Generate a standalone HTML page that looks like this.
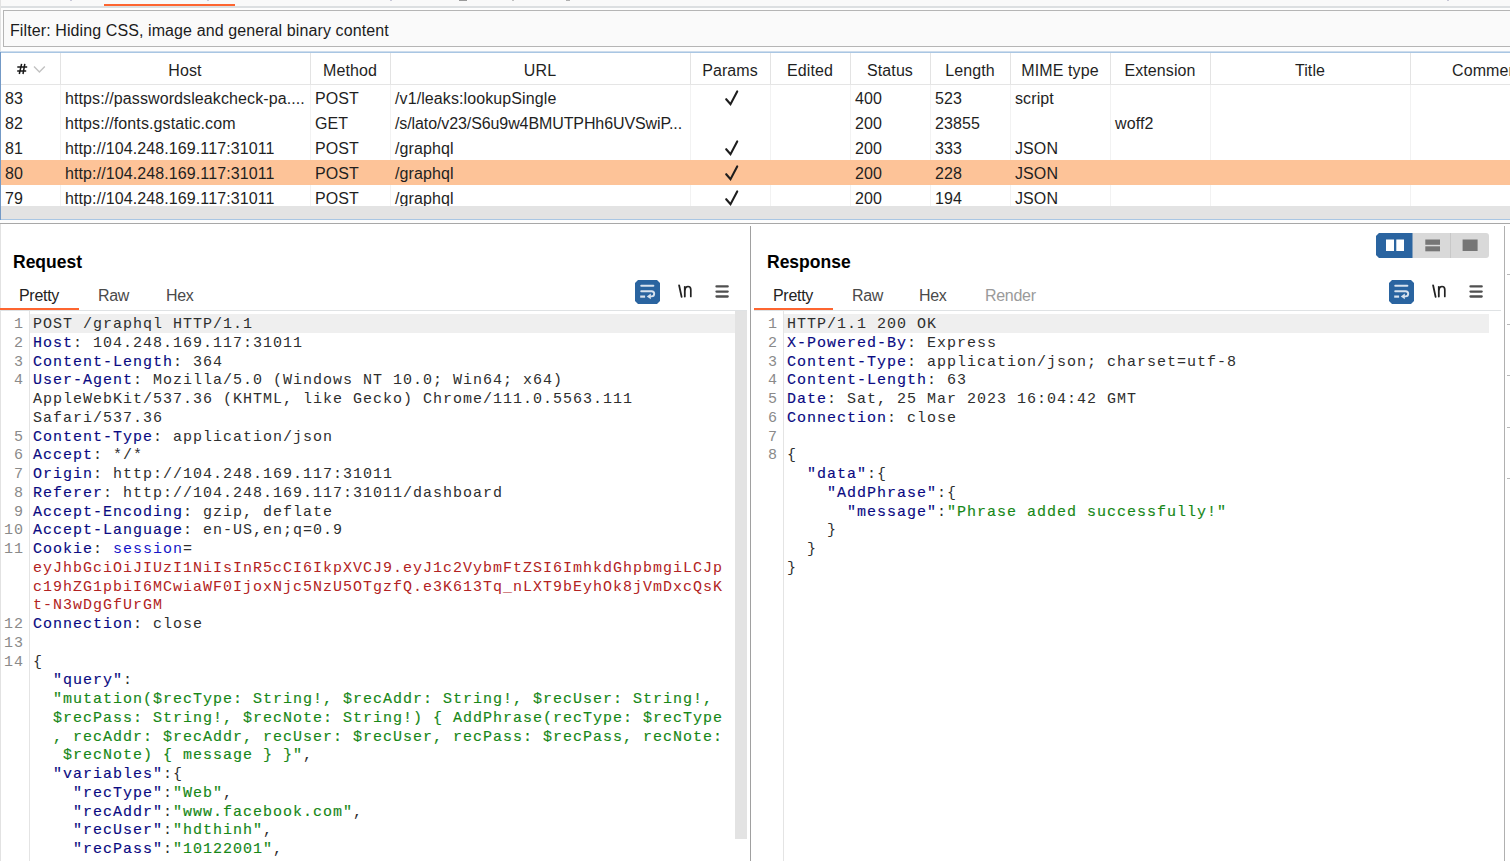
<!DOCTYPE html>
<html><head><meta charset="utf-8">
<style>
*{margin:0;padding:0;box-sizing:border-box}
html,body{width:1510px;height:861px;overflow:hidden;background:#fff}
body{position:relative;font-family:"Liberation Sans",sans-serif;color:#222}
.a{position:absolute}
.ui{font-family:"Liberation Sans",sans-serif;font-size:15px;letter-spacing:0.5px;white-space:pre;color:#1f1f1f}
.hd{position:absolute;top:54.5px;height:31px;line-height:31px;text-align:center;font-size:16px;letter-spacing:0.1px;white-space:pre;color:#1f1f1f}
.cell{position:absolute;margin-top:1px;height:25px;line-height:25px;white-space:pre;font-size:16px;letter-spacing:0.1px;color:#1f1f1f}
.code{position:absolute;font-family:"Liberation Mono",monospace;font-size:15px;letter-spacing:1px;line-height:18.75px;white-space:pre;color:#2e2e2e}
.ln{position:absolute;font-family:"Liberation Mono",monospace;font-size:15px;letter-spacing:1px;line-height:18.75px;white-space:pre;color:#8a8a8a;text-align:right}
.k{color:#0a0a82;-webkit-text-stroke:0.15px #0a0a82}
.r{color:#b22222}
.g{color:#178717;-webkit-text-stroke:0.15px #178717}
.tab{position:absolute;height:28px;line-height:28px;font-size:16px;letter-spacing:-0.3px;color:#4a4a4a;white-space:pre}
</style></head><body>

<div class="a" style="left:0px;top:0px;width:1510px;height:8px;background:#f9f9f9;"></div>
<div class="a" style="left:0px;top:6px;width:1510px;height:2px;background:#dcdfe1;"></div>
<div class="a" style="left:104px;top:4px;width:131px;height:2px;background:#fd6530;"></div>
<div class="a" style="left:0px;top:0px;width:1px;height:52px;background:#e2e2e2;"></div>
<div class="a" style="left:1px;top:8px;width:1509px;height:44px;background:#fdfdfd;"></div>
<div class="a" style="left:3px;top:10px;width:1507px;height:37px;background:#fafafa;border:1px solid #b5b5b5;border-right:none"></div>
<div class="a ui" style="left:10px;top:11.5px;height:37px;line-height:37px;font-size:16px;letter-spacing:0.1px;color:#1c1c1c">Filter: Hiding CSS, image and general binary content</div>
<div class="a" style="left:0px;top:52px;width:1510px;height:168px;background:#fff;"></div>
<div class="a" style="left:60px;top:53px;width:1px;height:31px;background:#e3e3e3;"></div>
<div class="a" style="left:60px;top:85px;width:1px;height:121px;background:#f2f2f2;"></div>
<div class="a" style="left:310px;top:53px;width:1px;height:31px;background:#e3e3e3;"></div>
<div class="a" style="left:310px;top:85px;width:1px;height:121px;background:#f2f2f2;"></div>
<div class="a" style="left:390px;top:53px;width:1px;height:31px;background:#e3e3e3;"></div>
<div class="a" style="left:390px;top:85px;width:1px;height:121px;background:#f2f2f2;"></div>
<div class="a" style="left:690px;top:53px;width:1px;height:31px;background:#e3e3e3;"></div>
<div class="a" style="left:690px;top:85px;width:1px;height:121px;background:#f2f2f2;"></div>
<div class="a" style="left:770px;top:53px;width:1px;height:31px;background:#e3e3e3;"></div>
<div class="a" style="left:770px;top:85px;width:1px;height:121px;background:#f2f2f2;"></div>
<div class="a" style="left:850px;top:53px;width:1px;height:31px;background:#e3e3e3;"></div>
<div class="a" style="left:850px;top:85px;width:1px;height:121px;background:#f2f2f2;"></div>
<div class="a" style="left:930px;top:53px;width:1px;height:31px;background:#e3e3e3;"></div>
<div class="a" style="left:930px;top:85px;width:1px;height:121px;background:#f2f2f2;"></div>
<div class="a" style="left:1010px;top:53px;width:1px;height:31px;background:#e3e3e3;"></div>
<div class="a" style="left:1010px;top:85px;width:1px;height:121px;background:#f2f2f2;"></div>
<div class="a" style="left:1110px;top:53px;width:1px;height:31px;background:#e3e3e3;"></div>
<div class="a" style="left:1110px;top:85px;width:1px;height:121px;background:#f2f2f2;"></div>
<div class="a" style="left:1210px;top:53px;width:1px;height:31px;background:#e3e3e3;"></div>
<div class="a" style="left:1210px;top:85px;width:1px;height:121px;background:#f2f2f2;"></div>
<div class="a" style="left:1410px;top:53px;width:1px;height:31px;background:#e3e3e3;"></div>
<div class="a" style="left:1410px;top:85px;width:1px;height:121px;background:#f2f2f2;"></div>
<div class="a" style="left:1px;top:160px;width:1509px;height:25px;background:#fdc398;"></div>
<div class="a" style="left:1px;top:84px;width:1509px;height:1px;background:#e5e5e5;"></div>
<svg class="a" style="left:14px;top:61px" width="16" height="16" viewBox="0 0 16 16"><path d="M7.6 2.8 L5.3 13 M10.8 2.8 L9 13 M3.3 6 H13.2 M3.2 10 H12.2" stroke="#1a1a1a" stroke-width="1.5" fill="none"/></svg>
<svg class="a" style="left:33px;top:65px" width="13" height="9" viewBox="0 0 13 9"><path d="M1 1.6 L6.4 7 L11.8 1.6" fill="none" stroke="#c2c2c2" stroke-width="1.4"/></svg>
<div class="hd" style="left:60px;width:250px;">Host</div>
<div class="hd" style="left:310px;width:80px;">Method</div>
<div class="hd" style="left:390px;width:300px;">URL</div>
<div class="hd" style="left:690px;width:80px;">Params</div>
<div class="hd" style="left:770px;width:80px;">Edited</div>
<div class="hd" style="left:850px;width:80px;">Status</div>
<div class="hd" style="left:930px;width:80px;">Length</div>
<div class="hd" style="left:1010px;width:100px;">MIME type</div>
<div class="hd" style="left:1110px;width:100px;">Extension</div>
<div class="hd" style="left:1210px;width:200px;">Title</div>
<div class="hd" style="left:1452px;text-align:left">Comment</div>
<div class="cell" style="left:5px;top:85px;">83</div>
<div class="cell" style="left:65px;top:85px;">https://passwordsleakcheck-pa....</div>
<div class="cell" style="left:315px;top:85px;">POST</div>
<div class="cell" style="left:395px;top:85px;">/v1/leaks:lookupSingle</div>
<svg class="a" style="left:723px;top:89px" width="18" height="18" viewBox="0 0 18 18"><path d="M3.2 10.2 L7.5 15.2 L14.2 2.4" fill="none" stroke="#1e1e1e" stroke-width="2.1" stroke-linejoin="miter" stroke-linecap="round"/></svg>
<div class="cell" style="left:855px;top:85px;">400</div>
<div class="cell" style="left:935px;top:85px;">523</div>
<div class="cell" style="left:1015px;top:85px;">script</div>
<div class="cell" style="left:5px;top:110px;">82</div>
<div class="cell" style="left:65px;top:110px;">https://fonts.gstatic.com</div>
<div class="cell" style="left:315px;top:110px;">GET</div>
<div class="cell" style="left:395px;top:110px;letter-spacing:-0.1px;">/s/lato/v23/S6u9w4BMUTPHh6UVSwiP...</div>
<div class="cell" style="left:855px;top:110px;">200</div>
<div class="cell" style="left:935px;top:110px;">23855</div>
<div class="cell" style="left:1115px;top:110px;">woff2</div>
<div class="cell" style="left:5px;top:135px;">81</div>
<div class="cell" style="left:65px;top:135px;">http://104.248.169.117:31011</div>
<div class="cell" style="left:315px;top:135px;">POST</div>
<div class="cell" style="left:395px;top:135px;">/graphql</div>
<svg class="a" style="left:723px;top:139px" width="18" height="18" viewBox="0 0 18 18"><path d="M3.2 10.2 L7.5 15.2 L14.2 2.4" fill="none" stroke="#1e1e1e" stroke-width="2.1" stroke-linejoin="miter" stroke-linecap="round"/></svg>
<div class="cell" style="left:855px;top:135px;">200</div>
<div class="cell" style="left:935px;top:135px;">333</div>
<div class="cell" style="left:1015px;top:135px;">JSON</div>
<div class="cell" style="left:5px;top:160px;">80</div>
<div class="cell" style="left:65px;top:160px;">http://104.248.169.117:31011</div>
<div class="cell" style="left:315px;top:160px;">POST</div>
<div class="cell" style="left:395px;top:160px;">/graphql</div>
<svg class="a" style="left:723px;top:164px" width="18" height="18" viewBox="0 0 18 18"><path d="M3.2 10.2 L7.5 15.2 L14.2 2.4" fill="none" stroke="#1e1e1e" stroke-width="2.1" stroke-linejoin="miter" stroke-linecap="round"/></svg>
<div class="cell" style="left:855px;top:160px;">200</div>
<div class="cell" style="left:935px;top:160px;">228</div>
<div class="cell" style="left:1015px;top:160px;">JSON</div>
<div class="cell" style="left:5px;top:185px;">79</div>
<div class="cell" style="left:65px;top:185px;">http://104.248.169.117:31011</div>
<div class="cell" style="left:315px;top:185px;">POST</div>
<div class="cell" style="left:395px;top:185px;">/graphql</div>
<svg class="a" style="left:723px;top:189px" width="18" height="18" viewBox="0 0 18 18"><path d="M3.2 10.2 L7.5 15.2 L14.2 2.4" fill="none" stroke="#1e1e1e" stroke-width="2.1" stroke-linejoin="miter" stroke-linecap="round"/></svg>
<div class="cell" style="left:855px;top:185px;">200</div>
<div class="cell" style="left:935px;top:185px;">194</div>
<div class="cell" style="left:1015px;top:185px;">JSON</div>
<div class="a" style="left:1px;top:206px;width:1509px;height:13px;background:#e3e3e3;"></div>
<div class="a" style="left:0px;top:219px;width:1510px;height:1px;background:#a9c6e3;"></div>
<div class="a" style="left:0px;top:51px;width:1510px;height:1px;background:#cddcec;"></div>
<div class="a" style="left:0px;top:52px;width:1510px;height:1px;background:#a9c6e3;"></div>
<div class="a" style="left:0px;top:52px;width:1px;height:168px;background:#7399c6;"></div>
<div class="a" style="left:0px;top:220px;width:1510px;height:3px;background:#fdfdfd;"></div>
<div class="a" style="left:0px;top:223px;width:1510px;height:1px;background:#a8a8a8;"></div>
<div class="a" style="left:0px;top:224px;width:1px;height:637px;background:#e2e2e2;"></div>
<div class="a" style="left:750px;top:226px;width:1px;height:635px;background:#a0a0a0;"></div>
<div class="a" style="left:1504px;top:226px;width:1px;height:635px;background:#b0b0b0;"></div>
<div class="a" style="left:13px;top:248px;font-size:17.5px;font-weight:bold;color:#000;line-height:28px;white-space:pre">Request</div>
<div class="a" style="left:767px;top:248px;font-size:17.5px;font-weight:bold;color:#000;line-height:28px;white-space:pre">Response</div>
<div class="tab" style="left:19px;top:282px;color:#222">Pretty</div>
<div class="tab" style="left:98px;top:282px;">Raw</div>
<div class="tab" style="left:166px;top:282px;">Hex</div>
<div class="a" style="left:0px;top:308px;width:79px;height:2px;background:#fd6530;"></div>
<div class="a" style="left:79px;top:310px;width:668px;height:1px;background:#dfe2e4;"></div>
<div class="a" style="left:0px;top:310px;width:79px;height:1px;background:#dfe2e4;"></div>
<div class="tab" style="left:773px;top:282px;color:#222">Pretty</div>
<div class="tab" style="left:852px;top:282px;">Raw</div>
<div class="tab" style="left:919px;top:282px;">Hex</div>
<div class="tab" style="left:985px;top:282px;color:#9a9a9a">Render</div>
<div class="a" style="left:754px;top:308px;width:79px;height:2px;background:#fd6530;"></div>
<div class="a" style="left:754px;top:310px;width:747px;height:1px;background:#dfe2e4;"></div>
<svg class="a" style="left:635px;top:280px" width="25" height="24" viewBox="0 0 25 24">
<path d="M3 0 H22 L25 3 V21 L22 24 H3 L0 21 V3 Z" fill="#2a64a0"/>
<path d="M6.2 5.8 H18.4" stroke="#d8e2ee" stroke-width="1.9" stroke-linecap="round" fill="none"/>
<path d="M6.2 11.2 H16.6 A2.6 2.6 0 0 1 16.6 16.4 H15" stroke="#d8e2ee" stroke-width="1.9" stroke-linecap="round" fill="none"/>
<path d="M5.2 16.6 H10.1" stroke="#d8e2ee" stroke-width="2.2" fill="none"/>
<path d="M11.8 16.4 L15.8 13.5 V19.3 Z" fill="#d8e2ee"/>
</svg>
<svg class="a" style="left:676px;top:283px" width="18" height="17" viewBox="0 0 18 17"><path d="M3.1 2.3 L5.6 13.9" stroke="#222" stroke-width="1.8" stroke-linecap="round" fill="none"/><path d="M8.8 13.5 V3.8" stroke="#222" stroke-width="1.8" stroke-linecap="round" fill="none"/><path d="M8.8 6.8 Q9.4 3.5 12 3.5 Q14.8 3.5 14.8 6.8 V13.5" stroke="#222" stroke-width="1.7" stroke-linecap="round" fill="none"/></svg>
<svg class="a" style="left:715px;top:285px" width="14" height="14" viewBox="0 0 14 14"><path d="M1.5 1.4 H12.7 M1.5 6.6 H12.7 M1.5 11.5 H12.7" stroke="#505050" stroke-width="2.3" stroke-linecap="round"/></svg>
<svg class="a" style="left:1389px;top:280px" width="25" height="24" viewBox="0 0 25 24">
<path d="M3 0 H22 L25 3 V21 L22 24 H3 L0 21 V3 Z" fill="#2a64a0"/>
<path d="M6.2 5.8 H18.4" stroke="#d8e2ee" stroke-width="1.9" stroke-linecap="round" fill="none"/>
<path d="M6.2 11.2 H16.6 A2.6 2.6 0 0 1 16.6 16.4 H15" stroke="#d8e2ee" stroke-width="1.9" stroke-linecap="round" fill="none"/>
<path d="M5.2 16.6 H10.1" stroke="#d8e2ee" stroke-width="2.2" fill="none"/>
<path d="M11.8 16.4 L15.8 13.5 V19.3 Z" fill="#d8e2ee"/>
</svg>
<svg class="a" style="left:1430px;top:283px" width="18" height="17" viewBox="0 0 18 17"><path d="M3.1 2.3 L5.6 13.9" stroke="#222" stroke-width="1.8" stroke-linecap="round" fill="none"/><path d="M8.8 13.5 V3.8" stroke="#222" stroke-width="1.8" stroke-linecap="round" fill="none"/><path d="M8.8 6.8 Q9.4 3.5 12 3.5 Q14.8 3.5 14.8 6.8 V13.5" stroke="#222" stroke-width="1.7" stroke-linecap="round" fill="none"/></svg>
<svg class="a" style="left:1469px;top:285px" width="14" height="14" viewBox="0 0 14 14"><path d="M1.5 1.4 H12.7 M1.5 6.6 H12.7 M1.5 11.5 H12.7" stroke="#505050" stroke-width="2.3" stroke-linecap="round"/></svg>
<svg class="a" style="left:1376px;top:233px" width="113" height="25" viewBox="0 0 113 25">
<path d="M3 0 H110 Q113 0 113 3 V22 Q113 25 110 25 H3 L0 22 V3 Z" fill="#d9d9d9"/>
<path d="M3 0 H36.5 V25 H3 L0 22 V3 Z" fill="#2a64a0"/>
<rect x="74" y="0" width="1" height="25" fill="#c8c8c8"/>
<rect x="10" y="6.5" width="8" height="11.5" fill="#fff"/>
<rect x="20.3" y="6.5" width="7.7" height="11.5" fill="#fff"/>
<rect x="49.3" y="6.5" width="14.7" height="5.3" fill="#767676"/>
<rect x="49.3" y="13.3" width="14.7" height="5" fill="#767676"/>
<rect x="86.6" y="6.5" width="15" height="11.5" fill="#767676"/>
</svg>
<div class="a" style="left:29px;top:311px;width:1px;height:550px;background:#e4e4e4;"></div>
<div class="a" style="left:30px;top:314px;width:705px;height:18.75px;background:#efefef;"></div>
<div class="a" style="left:735px;top:311px;width:12px;height:528px;background:#e3e3e3;"></div>
<div class="a" style="left:783px;top:311px;width:1px;height:550px;background:#e4e4e4;"></div>
<div class="a" style="left:784px;top:314px;width:704.7px;height:18.75px;background:#efefef;"></div>
<div class="code" style="left:33px;top:316px;">POST /graphql HTTP/1.1
<span class="k">Host</span>: 104.248.169.117:31011
<span class="k">Content-Length</span>: 364
<span class="k">User-Agent</span>: Mozilla/5.0 (Windows NT 10.0; Win64; x64)
AppleWebKit/537.36 (KHTML, like Gecko) Chrome/111.0.5563.111
Safari/537.36
<span class="k">Content-Type</span>: application/json
<span class="k">Accept</span>: */*
<span class="k">Origin</span>: http://104.248.169.117:31011
<span class="k">Referer</span>: http://104.248.169.117:31011/dashboard
<span class="k">Accept-Encoding</span>: gzip, deflate
<span class="k">Accept-Language</span>: en-US,en;q=0.9
<span class="k">Cookie</span>: <span style="color:#1515c8">session</span>=
<span class="r">eyJhbGciOiJIUzI1NiIsInR5cCI6IkpXVCJ9.eyJ1c2VybmFtZSI6ImhkdGhpbmgiLCJp</span>
<span class="r">c19hZG1pbiI6MCwiaWF0IjoxNjc5NzU5OTgzfQ.e3K613Tq_nLXT9bEyhOk8jVmDxcQsK</span>
<span class="r">t-N3wDgGfUrGM</span>
<span class="k">Connection</span>: close

{
  <span class="k">"query"</span>:
  <span class="g">&quot;mutation($recType: String!, $recAddr: String!, $recUser: String!,</span>
  <span class="g">$recPass: String!, $recNote: String!) { AddPhrase(recType: $recType</span>
  <span class="g">, recAddr: $recAddr, recUser: $recUser, recPass: $recPass, recNote:</span>
   <span class="g">$recNote) { message } }&quot;</span>,
  <span class="k">"variables"</span>:{
    <span class="k">"recType"</span>:<span class="g">&quot;Web&quot;</span>,
    <span class="k">"recAddr"</span>:<span class="g">&quot;www.facebook.com&quot;</span>,
    <span class="k">"recUser"</span>:<span class="g">&quot;hdthinh&quot;</span>,
    <span class="k">"recPass"</span>:<span class="g">&quot;10122001&quot;</span>,</div>
<div class="ln" style="left:-1px;top:316px;width:25px">1
2
3
4


5
6
7
8
9
10
11



12
13
14










</div>
<div class="code" style="left:787px;top:316px;">HTTP/1.1 200 OK
<span class="k">X-Powered-By</span>: Express
<span class="k">Content-Type</span>: application/json; charset=utf-8
<span class="k">Content-Length</span>: 63
<span class="k">Date</span>: Sat, 25 Mar 2023 16:04:42 GMT
<span class="k">Connection</span>: close

{
  <span class="k">"data"</span>:{
    <span class="k">"AddPhrase"</span>:{
      <span class="k">"message"</span>:<span class="g">&quot;Phrase added successfully!&quot;</span>
    }
  }
}</div>
<div class="ln" style="left:753px;top:316px;width:25px">1
2
3
4
5
6
7
8</div>
<div class="a" style="left:1507px;top:274px;width:3px;height:1px;background:#b8b8b8;"></div>
<div class="a" style="left:1507px;top:324px;width:3px;height:1px;background:#b8b8b8;"></div>
<div class="a" style="left:1507px;top:375px;width:3px;height:1px;background:#b8b8b8;"></div>
<div class="a" style="left:1507px;top:427px;width:3px;height:1px;background:#b8b8b8;"></div>
<div class="a" style="left:1507px;top:478px;width:3px;height:1px;background:#b8b8b8;"></div>
<div class="a" style="left:70px;top:0px;width:2px;height:1px;background:#c8c8d8;"></div>
<div class="a" style="left:207px;top:0px;width:2px;height:1px;background:#c8c8d8;"></div>
<div class="a" style="left:390px;top:0px;width:2px;height:1px;background:#c8c8d8;"></div>
<div class="a" style="left:459px;top:0px;width:8px;height:1px;background:#9a9a9a;"></div>
<div class="a" style="left:512px;top:0px;width:2px;height:1px;background:#c0c0c0;"></div>
<div class="a" style="left:566px;top:0px;width:4px;height:1px;background:#b0b0b0;"></div>
<div class="a" style="left:1447px;top:0px;width:2px;height:1px;background:#c8c8d8;"></div>
</body></html>
